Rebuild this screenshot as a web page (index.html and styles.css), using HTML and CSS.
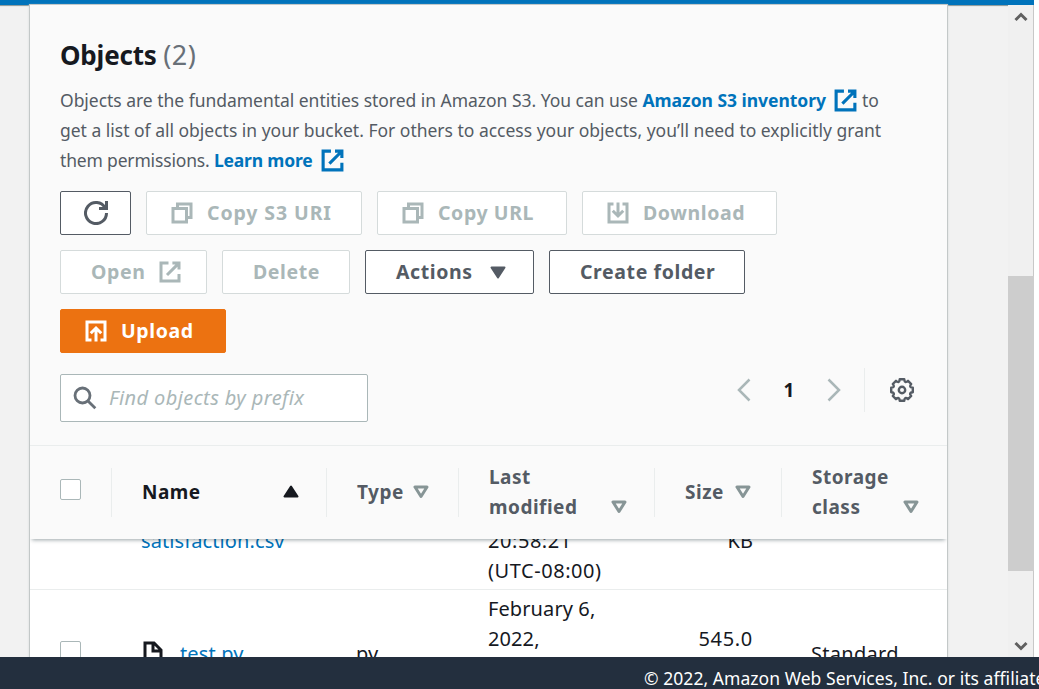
FILE: index.html
```
<!DOCTYPE html>
<html lang="en">
<head>
<meta charset="utf-8">
<title>Objects</title>
<link rel="stylesheet" href="styles.css">
</head>
<body>
<svg class="defs" width="0" height="0">
  <symbol id="external" viewBox="0 0 16 16"><path d="M9.6 2H14v4.4M6 10l7.6-7.6M14 9.4V14H2V2h5"/></symbol>
  <symbol id="copy" viewBox="0 0 16 16"><path d="M2 5h9v9H2zM5 5V2h9v9h-3"/></symbol>
  <symbol id="sort" viewBox="0 0 16 14"><path d="M2 2h12L8 11.5z" stroke-width="3" stroke-linejoin="round"/></symbol>
</svg>
<div class="app">
  <div class="topbar"></div>
  <div class="main">
    <section class="panel">
      <div class="panel-head">
        <h2>Objects <span class="count">(2)</span></h2>
        <p class="desc">
          <span class="line l1">Objects are the fundamental entities stored in Amazon S3. You can use <a>Amazon S3 inventory</a><svg class="ext"><use href="#external"/></svg>to</span>
          <span class="line l2">get a list of all objects in your bucket. For others to access your objects, you’ll need to explicitly grant</span>
          <span class="line l3">them permissions. <a>Learn more</a><svg class="ext"><use href="#external"/></svg></span>
        </p>
        <div class="buttons">
          <div class="btn-row">
            <button class="btn w71"><svg class="refresh" viewBox="0 0 16 16"><path d="M10 5h5V0M15 8a7 7 0 1 1-.9-3.4"/></svg></button>
            <button class="btn w216 off lead"><svg><use href="#copy"/></svg><span class="uri">Copy S3 URI</span></button>
            <button class="btn w190 off lead"><svg><use href="#copy"/></svg><span>Copy URL</span></button>
            <button class="btn w195 off lead"><svg viewBox="0 0 16 16"><path d="M5 2H2v12h12V2h-3M8 1v9M4.5 6.5L8 10l3.5-3.5"/></svg><span>Download</span></button>
          </div>
          <div class="btn-row">
            <button class="btn w147 off"><span>Open</span><svg><use href="#external"/></svg></button>
            <button class="btn w128 off"><span>Delete</span></button>
            <button class="btn w169"><span>Actions</span><svg class="caret" viewBox="0 0 16 13"><path d="M1.5 1.5h13L8 11.5z"/></svg></button>
            <button class="btn w196"><span>Create folder</span></button>
          </div>
          <div class="btn-row">
            <button class="btn w166 primary lead"><svg viewBox="0 0 16 16"><path d="M5 14H2V2h12v12h-3M8 15V6M4.5 9.5L8 6l3.5 3.5"/></svg><span>Upload</span></button>
          </div>
        </div>
        <div class="tools">
          <div class="search">
            <svg viewBox="0 0 24 24"><circle cx="9.5" cy="9.5" r="7.5"/><path d="M15 15l7.3 7.3"/></svg>
            <span>Find objects by prefix</span>
          </div>
          <div class="pager">
            <svg class="chev" viewBox="0 0 14 24"><path d="M12.5 1.5L2 12l10.500 10.500"/></svg>
            <b>1</b>
            <svg class="chev" viewBox="0 0 14 24"><path d="M1.500 1.500L12 12L1.500 22.500"/></svg>
            <i class="rule"></i>
            <svg class="gear" viewBox="-12 -12 24 24"><path d="M10.800-2.250V2.250Q6.300 2.600 9.200 6L6 9.200Q2.600 6.300 2.250 10.800H-2.250Q-2.600 6.300-6 9.200L-9.200 6Q-6.300 2.600-10.800 2.250V-2.250Q-6.300-2.600-9.200-6L-6-9.200Q-2.600-6.300-2.250-10.800H2.250Q2.600-6.300 6-9.200L9.200-6Q6.300-2.600 10.800-2.250Z"/><circle r="3.200"/></svg>
          </div>
        </div>
      </div>
      <div class="grid thead">
        <div class="cell check"><i class="box"></i></div>
        <div class="cell name"><span>Name</span><svg class="sort-up" viewBox="0 0 16 13"><path d="M1.500 11.500h13L8 1.500z"/></svg></div>
        <div class="cell"><span>Type</span><svg class="sort"><use href="#sort"/></svg></div>
        <div class="cell two">Last<br>modified<svg class="sort"><use href="#sort"/></svg></div>
        <div class="cell"><span>Size</span><svg class="sort size"><use href="#sort"/></svg></div>
        <div class="cell two">Storage<br>class<svg class="sort"><use href="#sort"/></svg></div>
      </div>
      <div class="rows">
        <div class="grid row first">
          <div></div>
          <div class="cell upper"><a>satisfaction.csv</a></div>
          <div></div>
          <div class="cell date">20:58:21<br>(UTC-08:00)</div>
          <div class="cell upper num">KB</div>
          <div></div>
        </div>
        <div class="grid row second">
          <div class="cell check"><i class="box"></i></div>
          <div class="cell file"><svg viewBox="0 0 20 24"><path d="M2 2h9l7 7v13H2zM10 2v8h8"/></svg><a>test.py</a></div>
          <div class="cell">py</div>
          <div class="cell">February 6,<br>2022,</div>
          <div class="cell num">545.0</div>
          <div class="cell std">Standard</div>
        </div>
      </div>
    </section>
    <div class="scrollbar">
      <svg viewBox="0 0 14 10"><path d="M1.500 8L7 2.500 12.500 8"/></svg>
      <div class="track"><div class="thumb"></div></div>
      <svg viewBox="0 0 14 10"><path d="M1.500 2L7 7.500 12.500 2"/></svg>
    </div>
  </div>
  <footer>© 2022, Amazon Web Services, Inc. or its affiliates.</footer>
</div>
</body>
</html>
```
FILE: styles.css
```
* { box-sizing: border-box; }
body { margin: 0; overflow: hidden; background: #fff; color: #16191f; font: 19px/30px "Noto Sans", "Open Sans", sans-serif; }
svg { fill: none; stroke: currentColor; stroke-width: 2; flex: none; }
.defs { position: absolute; }
.app { display: flex; flex-direction: column; width: 1039px; height: 689px; overflow: hidden; }
.topbar { height: 5px; width: 1034px; background: #0073bb; flex: none; }
.main { display: flex; height: 652px; width: 1034px; background: #f2f2f2; padding-left: 30px; box-shadow: inset 0 2px 1px -1px #879596; }
.panel { width: 917px; background: #fff; box-shadow: 0 0 0 1px #c3c8c8, 0 1px 2px 1px #d5d8d8; overflow: hidden; display: flex; flex-direction: column; }
.panel-head { background: #fafafa; height: 441px; padding: 32px 30px 0; border-bottom: 1px solid #eaeded; flex: none; }
h2 { margin: 0; font-size: 26px; line-height: 36px; font-weight: 700; letter-spacing: -0.2px; }
.count { font-weight: 400; color: #687078; font-size: 27px; letter-spacing: 0.5px; }
.desc { margin: 12px 0 0; font-size: 17.5px; color: #545b64; }
.line { display: flex; align-items: center; height: 30px; white-space: pre; }
.l1 { letter-spacing: -0.03px; }
.l2 { letter-spacing: -0.01px; }
.l3 { letter-spacing: -0.17px; }
a { color: #0073bb; }
.desc a { font-weight: 700; }
.ext { width: 25px; height: 25px; margin: 0 4px 0 7px; color: #0073bb; }
.buttons { display: flex; flex-direction: column; gap: 15px; margin-top: 16px; }
.btn-row { display: flex; gap: 15px; }
.btn { height: 44px; border: 1px solid #545b64; border-radius: 2px; background: #fff; color: #545b64; font: 700 19.5px/30px "Noto Sans", sans-serif; letter-spacing: 0.6px; padding: 0 0 0 30px; display: flex; align-items: center; gap: 13px; white-space: nowrap; }
.btn svg { width: 24px; height: 24px; }
.btn .caret { width: 16px; height: 13px; fill: currentColor; stroke-linejoin: round; margin-left: 4px; }
.lead { padding-left: 23px; }
.uri { letter-spacing: 0.9px; }
.off { color: #aab7b8; border-color: #d5dbdb; }
.primary { background: #ec7211; border-color: #ec7211; color: #fff; }
.w71 { width: 71px; padding: 0; justify-content: center; } .w216 { width: 216px; } .w190 { width: 190px; } .w195 { width: 195px; }
.w147 { width: 147px; } .w128 { width: 128px; } .w169 { width: 169px; } .w196 { width: 196px; } .w166 { width: 166px; }
.tools { display: flex; justify-content: space-between; margin-top: 21px; }
.search { width: 308px; height: 48px; border: 1px solid #aab7b8; border-radius: 2px; background: #fff; display: flex; align-items: center; gap: 12px; padding-left: 12px; color: #aab7b8; font-style: italic; font-size: 20px; letter-spacing: 0.4px; white-space: nowrap; }
.search svg { width: 24px; height: 24px; color: #687078; stroke-width: 2.8; }
.pager { display: flex; align-items: center; height: 44px; margin-top: -6px; padding-right: 3px; }
.chev { width: 14px; height: 24px; color: #aab7b8; stroke-width: 2.5; }
.pager b { width: 76px; text-align: center; }
.rule { width: 1px; height: 44px; background: #eaeded; margin: 0 25px 0 23px; }
.gear { width: 24px; height: 24px; color: #545b64; stroke-width: 2.4; stroke-linejoin: round; }
.grid { display: grid; grid-template-columns: 82px 215px 132px 196px 127px 165px; }
.thead { height: 93px; flex: none; background: #fafafa; padding: 22px 0; align-items: center; color: #545b64; font-weight: 700; letter-spacing: 0.5px; box-shadow: 0 3px 4px -2px rgba(0,28,36,.4); position: relative; }
.thead .cell { height: 49px; display: flex; align-items: center; padding: 0 0 2px 30px; border-right: 1px solid #eaeded; }
.thead .cell:last-child { border: 0; }
.thead .name { color: #16191f; justify-content: space-between; padding-right: 27px; }
.thead .two { display: block; position: relative; height: 61px; margin: -6px 0; border: 0; background: linear-gradient(#eaeded, #eaeded) right 6px / 1px 49px no-repeat; white-space: nowrap; }
.thead .two:last-child { background: none; }
.box { width: 21px; height: 21px; border: 1px solid #aab7b8; border-radius: 2px; background: #fff; display: block; }
.thead .box { margin-top: -5px; }
.sort { width: 16px; height: 14px; margin-left: 9px; color: #879596; }
.sort.size { margin-left: 11px; }
.two .sort { position: absolute; right: 28px; bottom: 9px; }
.sort-up { width: 16px; height: 13px; fill: currentColor; stroke-linejoin: round; }
.rows { flex: 1; overflow: hidden; }
.row { font-size: 20px; letter-spacing: 0.1px; }
.first { height: 51px; overflow: hidden; align-content: end; align-items: end; border-bottom: 1px solid #eaeded; }
.row .cell { padding-left: 29px; white-space: nowrap; }
.first .cell { padding-bottom: 3px; }
.first .upper { padding-bottom: 33px; }
.row .date { letter-spacing: 0.55px; }
.row .num { text-align: right; padding: 0 29px 0 0; letter-spacing: 0.7px; }
.first .num { padding-bottom: 33px; letter-spacing: 0; }
.second { padding-top: 4px; align-items: start; }
.second .check { padding: 47px 0 0 30px; }
.second .file { display: flex; gap: 17px; padding: 45px 0 0 31px; color: #16191f; }
.file svg { width: 20px; height: 24px; margin-top: 2px; stroke-width: 3; }
.second .num { padding-top: 30px; }
.second .cell:nth-child(3), .second .std { padding-top: 45px; }
.second .std { letter-spacing: 0.3px; }
.scrollbar { width: 26px; margin-left: 61px; background: #f0f0f0; border-right: 1px solid #c8c8c8; display: flex; flex-direction: column; align-items: center; padding: 7px 0 6px; color: #606060; }
.scrollbar svg { width: 14px; height: 10px; stroke-width: 3; }
.track { flex: 1; width: 26px; padding-top: 254px; }
.thumb { height: 295px; background: #cdcdcd; }
footer { height: 32px; flex: none; background: #232f3e; color: #fff; font-size: 17.5px; line-height: 43px; padding-left: 644px; letter-spacing: 0.05px; white-space: nowrap; overflow: hidden; }
```
